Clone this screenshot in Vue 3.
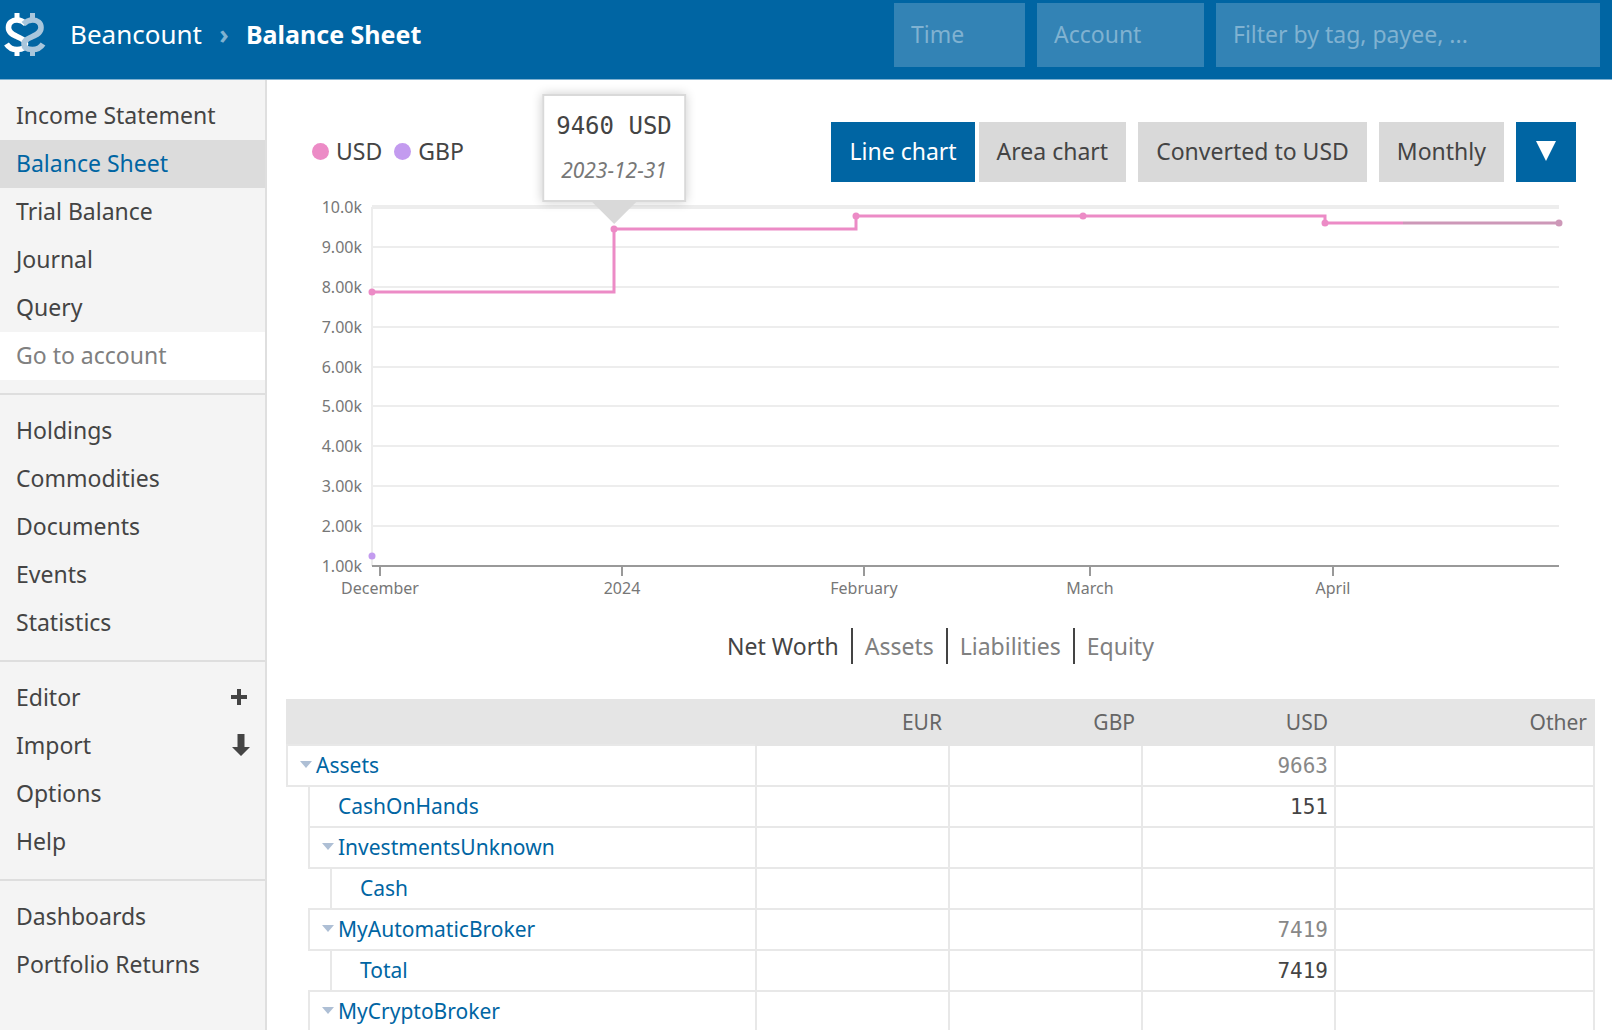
<script setup>
import { ref, computed, onMounted, onBeforeUnmount } from 'vue'

const menus = [
  [
    { label: 'Income Statement' },
    { label: 'Balance Sheet', selected: true },
    { label: 'Trial Balance' },
    { label: 'Journal' },
    { label: 'Query' },
    { input: 'Go to account' },
  ],
  [
    { label: 'Holdings' },
    { label: 'Commodities' },
    { label: 'Documents' },
    { label: 'Events' },
    { label: 'Statistics' },
  ],
  [
    { label: 'Editor', icon: 'plus' },
    { label: 'Import', icon: 'down' },
    { label: 'Options' },
    { label: 'Help' },
  ],
  [{ label: 'Dashboards' }, { label: 'Portfolio Returns' }],
]

const charts = ['Net Worth', 'Assets', 'Liabilities', 'Equity']
const activeChart = ref('Net Worth')
const mode = ref('Line chart')

const accounts = [
  { name: 'Assets', level: 0, parent: true, usd: '9663' },
  { name: 'CashOnHands', level: 1, usd: '151' },
  { name: 'InvestmentsUnknown', level: 1, parent: true },
  { name: 'Cash', level: 2 },
  { name: 'MyAutomaticBroker', level: 1, parent: true, usd: '7419' },
  { name: 'Total', level: 2, usd: '7419' },
  { name: 'MyCryptoBroker', level: 1, parent: true },
]

// Chart geometry, in pixels; the plot is as wide as its container.
const left = 86
const top = 17
const plotHeight = 359
const chart = ref(null)
const chartWidth = ref(1290)
const right = computed(() => chartWidth.value - 36)
const days = 152
const today = 132

const x = (day) => Math.round(left + (day / days) * (right.value - left))
const y = (value) => Math.round(top + ((10000 - value) / 9000) * plotHeight)

const balances = [
  { day: 0, value: 7870 },
  { day: 31, value: 9460 },
  { day: 62, value: 9780 },
  { day: 91, value: 9780 },
  { day: 122, value: 9610 },
  { day: 152, value: 9610 },
]
const yTicks = [10, 9, 8, 7, 6, 5, 4, 3, 2, 1].map((k) => ({
  value: k * 1000,
  label: k === 10 ? '10.0k' : `${k}.00k`,
}))
const xTicks = [
  { day: 1, label: 'December' },
  { day: 32, label: '2024' },
  { day: 63, label: 'February' },
  { day: 92, label: 'March' },
  { day: 123, label: 'April' },
]
const linePath = computed(() =>
  balances
    .map((b, i) => (i === 0 ? `M${x(b.day)} ${y(b.value)}` : `H${x(b.day)}V${y(b.value)}`))
    .join(''),
)

let observer
onMounted(() => {
  chartWidth.value = chart.value.clientWidth
  observer = new ResizeObserver(() => {
    chartWidth.value = chart.value.clientWidth
  })
  observer.observe(chart.value)
})
onBeforeUnmount(() => observer.disconnect())
</script>

<template>
  <div class="app">
    <header class="header">
      <svg class="logo" viewBox="0 0 50 64" aria-hidden="true">
        <defs>
          <g id="half" fill="none" stroke-width="5.6">
            <path d="M17 10v7M17 46v7" stroke-width="5" />
            <path d="M26 21C23 18 20 17 17 17C12 17 8.500 20 8.500 24.500C8.500 30 13 31.500 17 33.500C22 36 25.500 37 25.500 41C25.500 45 22 46.500 17 46.500C12 46.500 9 45 6.500 41" />
          </g>
        </defs>
        <use href="#half" stroke="#fff" />
        <use href="#half" stroke="#a9c6dc" transform="translate(49.5 0) scale(-1 1)" />
      </svg>
      <h1 class="title">
        <a href="#">Beancount</a><span class="crumb">›</span><strong>Balance Sheet</strong>
      </h1>
      <form class="filters" @submit.prevent>
        <input class="time" type="text" placeholder="Time" aria-label="Time" />
        <input class="account" type="text" placeholder="Account" aria-label="Account" />
        <input class="tags" type="text" placeholder="Filter by tag, payee, ..." aria-label="Filter by tag, payee" />
      </form>
    </header>

    <div class="body">
      <aside class="sidebar">
        <ul v-for="(menu, m) in menus" :key="m" class="menu">
          <li v-for="item in menu" :key="item.label || item.input">
            <input v-if="item.input" class="goto" type="text" :placeholder="item.input" :aria-label="item.input" />
            <a v-else href="#" :class="{ selected: item.selected }">
              <span>{{ item.label }}</span>
              <svg v-if="item.icon === 'plus'" class="plus" viewBox="0 0 16 16" aria-hidden="true">
                <path d="M6 0h4v6h6v4h-6v6H6v-6H0V6h6z" />
              </svg>
              <svg v-if="item.icon === 'down'" class="down" viewBox="0 0 18 22" aria-hidden="true">
                <path d="M5.500 0h7v13H18l-9 9-9-9h5.500z" />
              </svg>
            </a>
          </li>
        </ul>
      </aside>

      <main class="main">
        <div class="controls">
          <div class="legend">
            <span class="key usd">USD</span>
            <span class="key gbp">GBP</span>
          </div>
          <div class="modes">
            <button
              v-for="name in ['Line chart', 'Area chart']"
              :key="name"
              type="button"
              :class="{ active: mode === name }"
              @click="mode = name"
            >{{ name }}</button>
          </div>
          <button type="button">Converted to USD</button>
          <button type="button">Monthly</button>
          <button type="button" class="active toggle" aria-label="Toggle charts">
            <svg viewBox="0 0 20 20" aria-hidden="true"><path d="M0 0h20L10 20z" /></svg>
          </button>
        </div>

        <div ref="chart" class="chart">
          <svg :width="chartWidth" height="410" role="img" aria-label="Net worth over time">
            <defs>
              <clipPath id="past"><rect x="0" y="0" :width="x(today)" height="410" /></clipPath>
              <clipPath id="future"><rect :x="x(today)" y="0" :width="chartWidth - x(today)" height="410" /></clipPath>
            </defs>
            <g class="grid">
              <path :d="`M${left} ${top}V${top + plotHeight}`" />
              <g v-for="tick in yTicks" :key="tick.value">
                <path :d="`M${left} ${y(tick.value)}H${right}`" :class="{ first: tick.value === 10000 }" />
                <text :x="left - 10" :y="y(tick.value) + 6" text-anchor="end">{{ tick.label }}</text>
              </g>
            </g>
            <path class="axis" :d="`M${left} ${top + plotHeight}H${right}`" />
            <g v-for="tick in xTicks" :key="tick.day">
              <path class="axis" :d="`M${x(tick.day)} ${top + plotHeight}v10`" />
              <text :x="x(tick.day)" :y="top + plotHeight + 28" text-anchor="middle">{{ tick.label }}</text>
            </g>
            <g v-for="part in ['past', 'future']" :key="part" :class="['series', part]" :clip-path="`url(#${part})`">
              <path :d="linePath" />
              <circle v-for="b in balances" :key="b.day" :cx="x(b.day)" :cy="y(b.value)" r="3.5" />
            </g>
            <circle class="gbp-point" :cx="left" :cy="y(1250)" r="3.5" />
          </svg>
          <div class="tooltip" :style="{ left: `${x(31)}px` }">
            <span class="amount">9460 USD</span>
            <em>2023-12-31</em>
          </div>
        </div>

        <nav class="tabs">
          <button
            v-for="name in charts"
            :key="name"
            type="button"
            :class="{ current: activeChart === name }"
            @click="activeChart = name"
          >{{ name }}</button>
        </nav>

        <table class="tree">
          <colgroup>
            <col />
            <col class="currency" />
            <col class="currency" />
            <col class="currency" />
            <col class="other" />
          </colgroup>
          <thead>
            <tr>
              <th></th>
              <th>EUR</th>
              <th>GBP</th>
              <th>USD</th>
              <th>Other</th>
            </tr>
          </thead>
          <tbody>
            <tr v-for="row in accounts" :key="row.name">
              <td class="name">
                <div :class="`level-${row.level}`">
                  <svg class="arrow" viewBox="0 0 12 7" aria-hidden="true">
                    <path v-if="row.parent" d="M0 0h12L6 7z" />
                  </svg>
                  <a href="#">{{ row.name }}</a>
                </div>
              </td>
              <td></td>
              <td></td>
              <td :class="{ dimmed: row.parent }">{{ row.usd }}</td>
              <td></td>
            </tr>
          </tbody>
        </table>
      </main>
    </div>
  </div>
</template>

<style>
body {
  background: #fff;
}
</style>

<style scoped>
.app {
  display: flex;
  flex-direction: column;
  height: 100vh;
  overflow: hidden;
  color: #444;
  font-family: "Noto Sans", sans-serif;
  font-size: 23px;
}

.app *,
.app *::before,
.app *::after {
  box-sizing: border-box;
}

a {
  color: inherit;
  text-decoration: none;
}

button,
input {
  margin: 0;
  border: 0;
  border-radius: 0;
  color: inherit;
  font: inherit;
}

button {
  cursor: pointer;
}

.header {
  display: flex;
  flex: none;
  align-items: center;
  padding: 3px 12px 12px 0;
  border-bottom: 1px solid #80b2d1;
  background: #0065a3;
  color: #fff;
}

.logo {
  width: 50px;
  height: 64px;
}

.title {
  display: flex;
  flex: 1;
  align-items: center;
  margin: 0;
  padding: 0 0 2px 20px;
  font-size: 26px;
  font-weight: 400;
  line-height: 60px;
  white-space: nowrap;
}

.title strong {
  font-size: 25px;
}

.crumb {
  width: 44px;
  color: #80b2d1;
  font-weight: 700;
  text-align: center;
}

.filters {
  display: flex;
  gap: 12px;
}

.filters input {
  height: 64px;
  padding: 0 17px 2px;
  background: #3383b5;
}

.filters input::placeholder {
  color: #80b2d1;
  opacity: 1;
}

.time {
  width: 131px;
}

.account {
  width: 167px;
}

.tags {
  width: 384px;
}

.body {
  display: flex;
  flex: 1;
  min-height: 0;
}

.sidebar {
  flex: none;
  width: 267px;
  overflow: hidden;
  border-right: 2px solid #dfdfdf;
  background: #f4f4f4;
}

.menu {
  margin: 0;
  padding: 12px 0 13px;
  border-bottom: 2px solid #dedede;
  list-style: none;
}

.menu:last-child {
  border-bottom: 0;
}

.menu a {
  display: flex;
  align-items: center;
  justify-content: space-between;
  height: 48px;
  padding: 0 16px 3px;
  line-height: 44px;
}

.menu a.selected {
  background: #dcdcdc;
  color: #0065a3;
}

.menu svg {
  fill: #444;
}

.plus {
  width: 16px;
  height: 16px;
  margin-right: 2px;
}

.down {
  width: 18px;
  height: 22px;
  margin-right: -1px;
}

.goto {
  display: block;
  width: 100%;
  height: 48px;
  padding: 0 16px 2px;
  background: #fff;
}

.goto::placeholder {
  color: #808080;
  opacity: 1;
}

.main {
  flex: 1;
  min-width: 0;
  padding: 42px 17px 0 19px;
  overflow-y: auto;
  scrollbar-width: none;
}

.controls {
  display: flex;
  gap: 12px;
  align-items: center;
  padding: 0 19px 0 26px;
}

.legend {
  display: flex;
  flex: 1;
  gap: 12px;
  padding-bottom: 2px;
}

.key {
  display: flex;
  gap: 7px;
  align-items: center;
}

.key::before {
  width: 17px;
  height: 17px;
  border-radius: 50%;
  content: "";
}

.usd::before {
  background: #ec8bc6;
}

.gbp::before {
  background: #c39bef;
}

.modes {
  display: flex;
  gap: 4px;
}

.controls button {
  height: 60px;
  padding: 0 18px 2px;
  background: #d9d9d9;
  white-space: nowrap;
}

.controls button.active {
  background: #0065a3;
  color: #fff;
}

.controls button.toggle {
  padding: 0 20px 3px;
}

.toggle svg {
  display: block;
  width: 20px;
  height: 20px;
  fill: #fff;
}

.chart {
  position: relative;
  margin: 8px 0 0;
}

.chart > svg {
  display: block;
}

.chart text {
  fill: #777;
  font-size: 16px;
}

.grid path {
  stroke: #ededed;
  stroke-width: 2;
}

.grid path.first {
  stroke-width: 4;
}

.axis {
  stroke: #999;
  stroke-width: 2;
}

.series path {
  fill: none;
  stroke-width: 3;
}

.past {
  fill: #ec8bc6;
  stroke: #ec8bc6;
}

.future {
  fill: #cd98b8;
  stroke: #cd98b8;
}

.series circle {
  stroke: none;
}

.gbp-point {
  fill: #c39bef;
}

.tooltip {
  position: absolute;
  bottom: 398px;
  display: flex;
  flex-direction: column;
  padding: 8px 12px;
  border: 2px solid #d9d9d9;
  background: #fff;
  box-shadow: 0 0 10px rgba(0, 0, 0, 0.2);
  line-height: 44px;
  text-align: center;
  white-space: nowrap;
  transform: translateX(-50%);
}

.tooltip::after {
  position: absolute;
  top: 100%;
  left: 50%;
  border: 24px solid transparent;
  border-top-color: #d9d9d9;
  border-bottom: 0;
  content: "";
  transform: translateX(-50%);
}

.amount {
  font-family: "DejaVu Sans Mono", monospace;
  font-size: 24px;
}

.tooltip em {
  color: #777;
  font-size: 21px;
}

.tabs {
  display: flex;
  justify-content: center;
  margin: 28px 0 35px;
}

.tabs button {
  height: 36px;
  padding: 0 12px;
  border-left: 2px solid #444;
  background: none;
  color: #808080;
  line-height: 34px;
}

.tabs button:first-child {
  border-left: 0;
}

.tabs button.current {
  color: #444;
}

.tree {
  width: 100%;
  border-spacing: 0;
  font-size: 21px;
  table-layout: fixed;
}

.currency {
  width: 193px;
}

.other {
  width: 259px;
}

.tree th {
  height: 47px;
  padding: 0 8px 2px;
  background: #e5e5e5;
  color: #666;
  font-weight: 400;
  text-align: right;
}

.tree td {
  height: 41px;
  padding: 0 6px;
  border-right: 2px solid #e8e8e8;
  border-bottom: 2px solid #e8e8e8;
  font-family: "DejaVu Sans Mono", monospace;
  line-height: 38px;
  text-align: right;
}

.tree td.dimmed {
  color: #888;
}

.tree td.name {
  padding: 0;
  border-bottom: 0;
  color: #0065a3;
  font-family: inherit;
}

.name div {
  display: flex;
  gap: 4px;
  align-items: center;
  height: 43px;
  margin-top: -2px;
  padding: 0 0 2px 12px;
  border: 2px solid #e8e8e8;
  border-right: 0;
}

.name .level-1 {
  margin-left: 22px;
}

.name .level-2 {
  margin-left: 44px;
}

.arrow {
  width: 12px;
  height: 7px;
  fill: #aebfd5;
}
</style>
